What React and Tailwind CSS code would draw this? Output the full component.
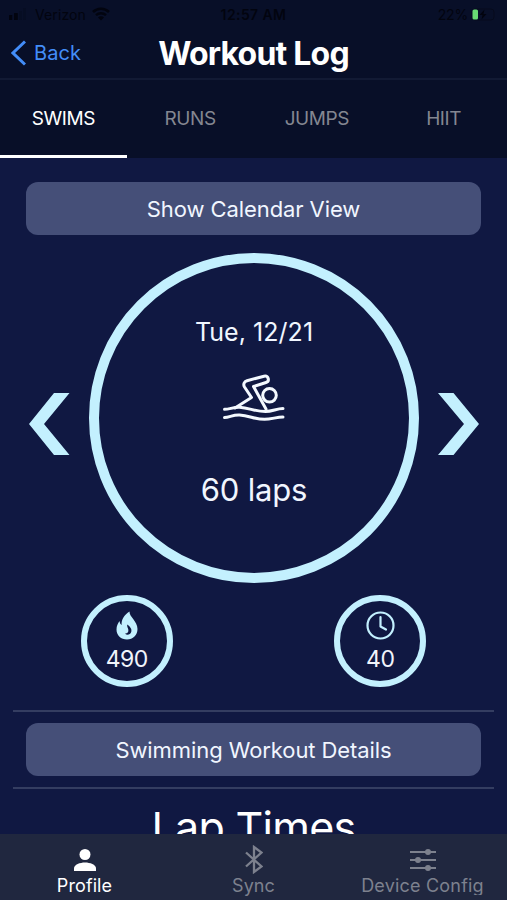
import React, { useState } from "react";

const tabs = ["SWIMS", "RUNS", "JUMPS", "HIIT"];

function StatusBar() {
  return (
    <div className="flex h-7 items-center justify-between px-[9px] text-[14px] text-[#02040f]">
      <div className="flex flex-1 items-center">
        <svg width="17" height="12" viewBox="0 0 17 12" fill="currentColor">
          <rect x="0" y="7" width="3.2" height="5" rx="0.6" />
          <rect x="5" y="5" width="3.8" height="7" rx="0.6" />
          <rect x="10" y="3" width="3" height="9" rx="0.6" opacity="0.2" />
          <rect x="14" y="0" width="3" height="12" rx="0.6" opacity="0.2" />
        </svg>
        <span className="ml-[9px] tracking-[0.1px]">Verizon</span>
        <svg className="ml-[6px]" width="18" height="14" viewBox="0 0 18 14" fill="none" stroke="currentColor">
          <path d="M1 5a11.5 11.5 0 0 1 16 0" strokeWidth="2.6" />
          <path d="M4 8.2a7.2 7.2 0 0 1 10 0" strokeWidth="2.4" />
          <path d="M9 13.5 6 10.6a4.2 4.2 0 0 1 6 0z" fill="currentColor" stroke="none" />
        </svg>
      </div>
      <span className="font-semibold tracking-[0.4px]">12:57 AM</span>
      <div className="flex flex-1 items-center justify-end">
        <span className="tracking-[-0.2px]">22%</span>
        <svg className="ml-[3px]" width="27" height="13" viewBox="0 0 27 13">
          <rect x="1" y="1" width="22" height="11" rx="3" fill="none" stroke="#060a1c" />
          <rect x="1.500" y="1.500" width="5.5" height="10" rx="1.6" fill="#69dc74" />
          <path d="M13.500 1.500 8.500 7h3l-1 4.500 5-5.500h-3z" fill="#02040f" />
        </svg>
      </div>
    </div>
  );
}

function Header() {
  return (
    <header className="grid h-[52px] grid-cols-[1fr_auto_1fr] items-center border-b-2 border-[#121a34]">
      <button className="flex items-center pl-[11px] text-[#438df8]">
        <svg width="15" height="26" viewBox="0 0 15 26" fill="none" stroke="currentColor" strokeWidth="3">
          <path d="M14 1.500 2 13l12 11.500" />
        </svg>
        <span className="ml-[8px] text-[20px] tracking-[0.1px]">Back</span>
      </button>
      <h1 className="pt-px text-[32px] font-bold leading-none tracking-[-0.8px] text-white">Workout Log</h1>
    </header>
  );
}

function Tabs({ active, onChange }) {
  return (
    <nav className="grid h-[78px] grid-cols-4">
      {tabs.map((tab) => (
        <button
          key={tab}
          onClick={() => onChange(tab)}
          className={
            tab === active
              ? "border-b-[3px] border-white pt-[4px] text-[19px] tracking-[-0.4px] text-white"
              : "border-b-[3px] border-transparent pt-[4px] text-[19px] tracking-[-0.4px] text-[#848791]"
          }
        >
          {tab}
        </button>
      ))}
    </nav>
  );
}

function WideButton({ children }) {
  return (
    <button className="h-[53px] w-full rounded-[12px] bg-[#454f78] pt-[2px] text-[22px] tracking-[-0.08px] text-[#f1f6ff]">
      {children}
    </button>
  );
}

function Swimmer() {
  return (
    <svg
      width="64"
      height="50"
      viewBox="0 0 64 50"
      fill="none"
      stroke="#f4f9ff"
      strokeWidth="3"
      strokeLinecap="round"
      strokeLinejoin="round"
    >
      <path d="M13 36 29.500 25.500 22.500 15c-1.500-2.500-.5-5.500 2.500-6.300L42 4.200c4.500-1 6 5 2 6.300L31.500 14.500 44 37" />
      <circle cx="47.500" cy="23.300" r="6.800" />
      <path d="M2.500 37.300c5 0 9-2.300 15-2 10 .5 15 4.300 26 4.300 7 0 11-3 17.500-3" />
      <path d="M2.500 45.500c5 0 8-2.800 15-2.500 10 .5 15 4.300 25 4.300 7 0 12-2.300 18.500-2.300" />
    </svg>
  );
}

function Stat({ icon, value }) {
  return (
    <div className="flex h-[92px] w-[92px] flex-col items-center rounded-full border-[6px] border-[#c3f0fe] pt-[10px]">
      <div className="flex h-[30px] items-center">{icon}</div>
      <span className="mt-[4px] text-[23px] leading-7 tracking-[-0.5px] text-[#f1f4fb]">{value}</span>
    </div>
  );
}

function Flame() {
  return (
    <svg width="22" height="29" viewBox="0 0 22 29">
      <path
        fill="#c3f0fe"
        fillRule="evenodd"
        d="M13.500.5c-.3 5.500 8 9.500 8 17.500 0 6-4.500 10.500-10.500 10.500S.5 24.500.5 18.500c0-3.500 1.200-6 3-8.500.3 2 .8 3.200 2.200 4C5 9 8.500 3.500 13.500.5zM11.200 13.500c2.800 2 5 4.500 4 7.500-.9 2.700-4 3.400-6.200 1.800 2.500-.1 3.800-1.800 3.300-4.200-.4-1.800-1.400-2.900-1.100-5.100z"
      />
    </svg>
  );
}

function Clock() {
  return (
    <svg width="29" height="29" viewBox="0 0 29 29" fill="none" stroke="#c3f0fe" strokeWidth="2.200">
      <circle cx="14.500" cy="14.500" r="13" />
      <path d="M14.500 6v9.500l5.500 3" strokeLinecap="round" strokeLinejoin="round" />
    </svg>
  );
}

function BottomBar() {
  return (
    <footer className="grid h-[66px] shrink-0 grid-cols-3 overflow-hidden bg-[#20273f] text-[18px] tracking-[0.1px] text-[#7d818e]">
      <div className="flex flex-col items-center text-white">
        <svg className="mt-[15px]" width="22" height="22" viewBox="0 0 22 22" fill="currentColor">
          <circle cx="11" cy="5.500" r="5.500" />
          <path d="M0 22v-2.500C0 15.500 6 13.500 11 13.500s11 2 11 6V22z" />
        </svg>
        <span className="mt-[3px] leading-6">Profile</span>
      </div>
      <div className="flex flex-col items-center">
        <svg className="mt-[11px]" width="18" height="29" viewBox="0 0 18 29" fill="none" stroke="currentColor" strokeWidth="2.300">
          <path d="m1 7.500 15.500 14L9 27V2l7.500 5.500L1 21.500" />
        </svg>
        <span className="leading-6">Sync</span>
      </div>
      <div className="flex flex-col items-center">
        <svg className="mt-[15px]" width="26" height="22" viewBox="0 0 26 22" stroke="currentColor" strokeWidth="2" fill="currentColor">
          <path d="M0 3h26M0 11h26M0 19h26" />
          <circle cx="18" cy="3" r="2" />
          <circle cx="8" cy="11" r="2" />
          <circle cx="18" cy="19" r="2" />
        </svg>
        <span className="mt-[3px] h-[21px] overflow-hidden leading-6 tracking-[0.2px]">Device Config</span>
      </div>
    </footer>
  );
}

export default function App() {
  const [active, setActive] = useState("SWIMS");

  return (
    <div className="flex h-[900px] w-[507px] flex-col overflow-hidden bg-[#101842] font-['Inter',sans-serif]">
      <div className="shrink-0 bg-[#080f28]">
        <StatusBar />
        <Header />
        <Tabs active={active} onChange={setActive} />
      </div>

      <main className="min-h-0 flex-1 overflow-hidden">
        <div className="px-[26px] pt-[23.5px]">
          <WideButton>Show Calendar View</WideButton>
        </div>

        <div className="mt-[18px] flex items-center justify-between pl-[29px] pr-[28px]">
          <button className="pt-[12px]">
            <svg width="41" height="62" viewBox="0 0 41 62" fill="#c3f0fe">
              <path d="M0 31 25 0h15.500L15 31l25.500 31H25z" />
            </svg>
          </button>
          <div className="flex h-[330px] w-[330px] flex-col items-center rounded-full border-[10px] border-[#c3f0fe] pt-[51px]">
            <p className="text-[25px] leading-9 tracking-[0.05px] text-[#f1f6ff]">Tue, 12/21</p>
            <div className="mt-[22px]">
              <Swimmer />
            </div>
            <p className="mt-[48px] text-[31px] leading-10 tracking-[-0.2px] text-[#f1f6ff]">60 laps</p>
          </div>
          <button className="pt-[12px]">
            <svg width="41" height="62" viewBox="0 0 41 62" fill="#c3f0fe">
              <path d="M41 31 15.500 0H0l26 31L0 62h15.500z" />
            </svg>
          </button>
        </div>

        <div className="mt-[12px] grid grid-cols-2 justify-items-center">
          <Stat icon={<Flame />} value="490" />
          <Stat icon={<Clock />} value="40" />
        </div>

        <div className="mx-[13px] mt-[23.5px] border-y-2 border-[#343d61] px-[13px] py-[11px]">
          <WideButton>Swimming Workout Details</WideButton>
        </div>

        <h2 className="mt-[10px] text-center text-[43px] leading-[56px] tracking-[-0.7px] text-white">Lap Times</h2>
      </main>

      <BottomBar />
    </div>
  );
}
